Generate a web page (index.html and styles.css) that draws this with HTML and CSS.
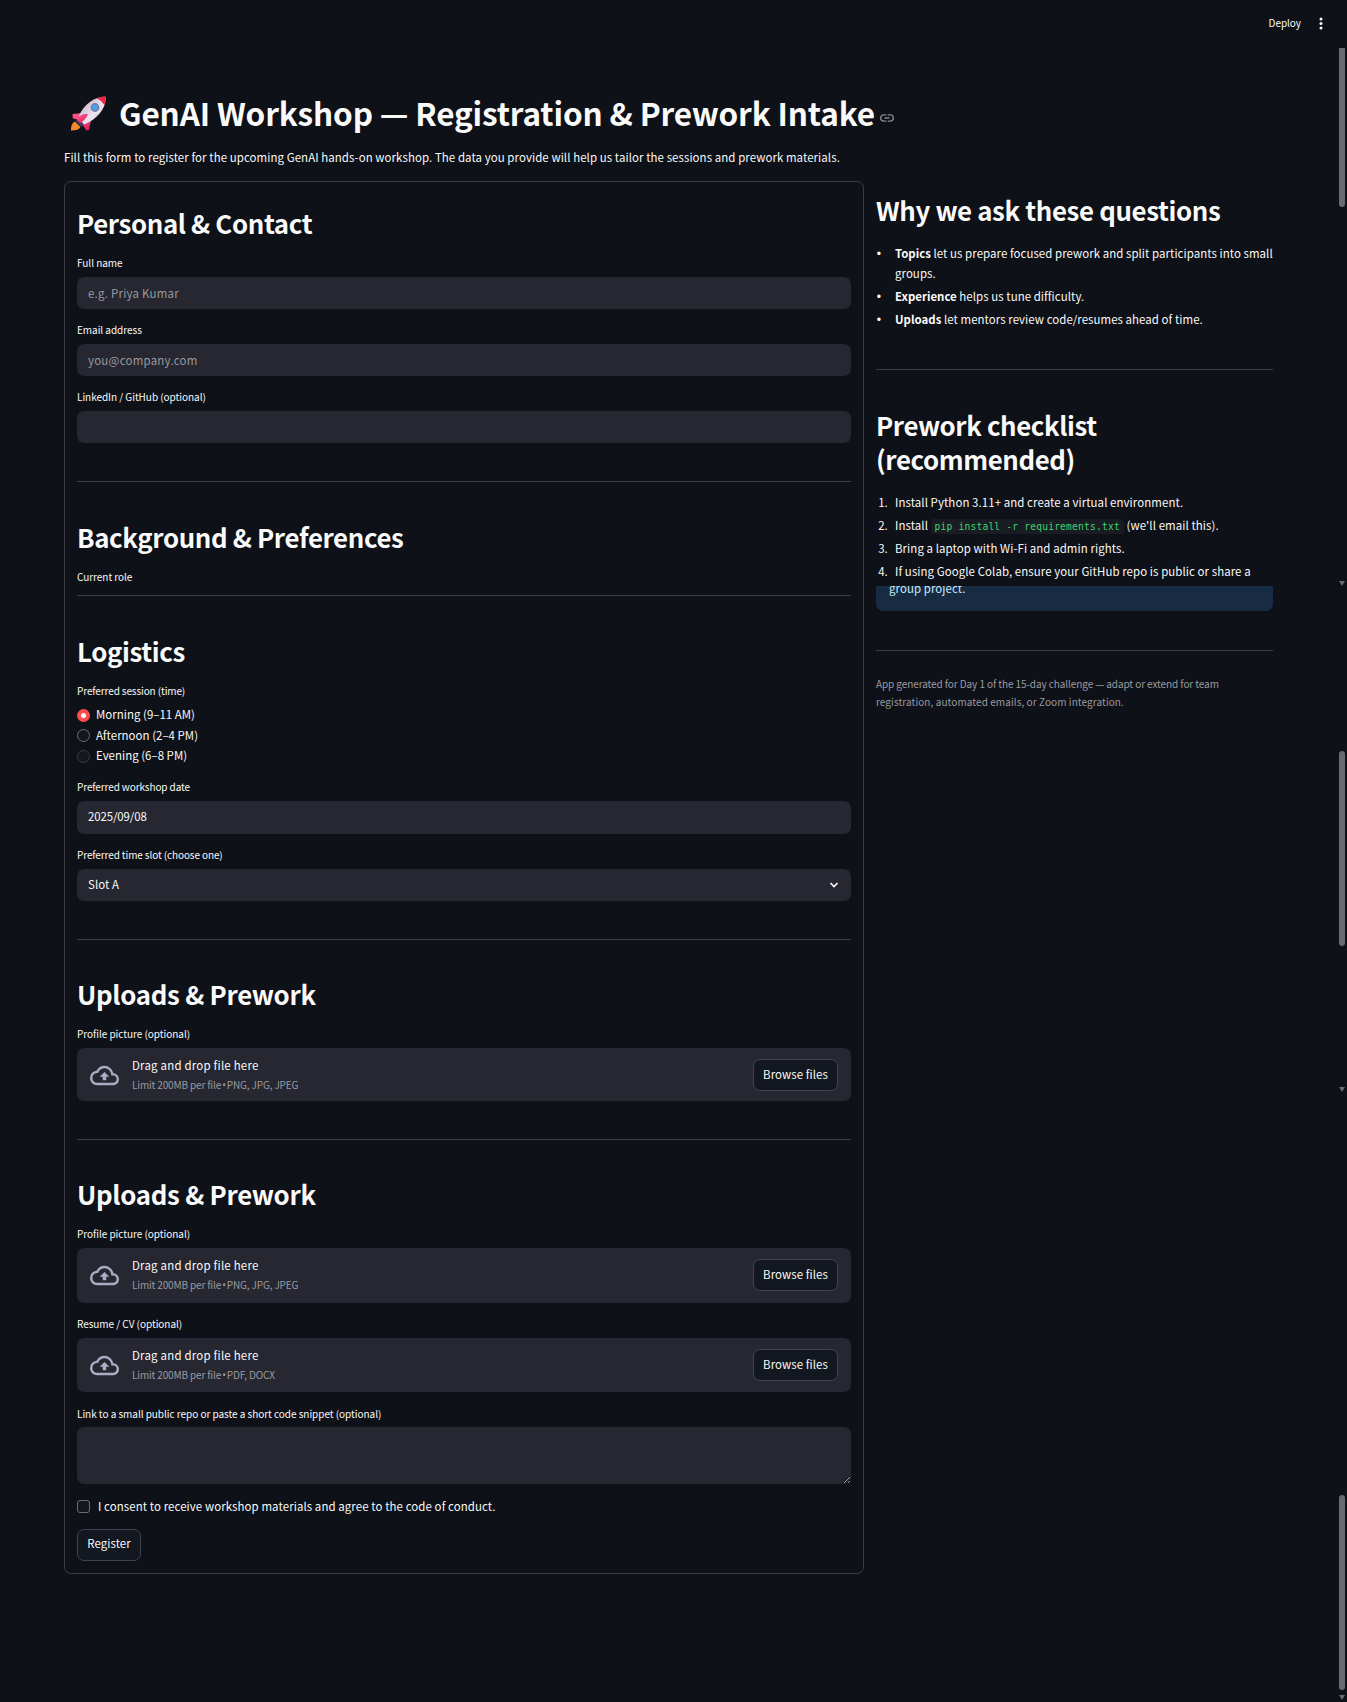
FILE: index.html
```html
<!DOCTYPE html>
<html lang="en">
<head>
<meta charset="utf-8">
<title>GenAI Workshop — Registration &amp; Prework Intake</title>
<link rel="stylesheet" href="styles.css">
</head>
<body>
<svg class="defs" width="0" height="0" aria-hidden="true">
  <symbol id="cloud" viewBox="0 0 24 24"><path d="M19.35 10.04A7.49 7.49 0 0 0 12 4C9.11 4 6.6 5.64 5.35 8.04A5.994 5.994 0 0 0 0 14c0 3.31 2.69 6 6 6h13c2.76 0 5-2.24 5-5 0-2.64-2.05-4.78-4.65-4.96zM19 18H6c-2.21 0-4-1.79-4-4 0-2.05 1.53-3.76 3.56-3.97l1.07-.11.5-.95A5.469 5.469 0 0 1 12 6c2.62 0 4.88 1.86 5.39 4.43l.3 1.5 1.53.11A2.98 2.98 0 0 1 22 15c0 1.65-1.35 3-3 3zM8 13h2.55v3h2.9v-3H16l-4-4z"/></symbol>
</svg>
<header class="toolbar">
  <span class="deploy">Deploy</span>
  <svg class="dots" viewBox="0 0 4 14"><circle cx="2" cy="2" r="1.5"/><circle cx="2" cy="6.5" r="1.5"/><circle cx="2" cy="11" r="1.5"/></svg>
</header>
<main class="page">
  <h1 class="title">
    <svg class="rocket" viewBox="0 0 35 35">
      <defs>
        <linearGradient id="hull" x1="0" y1="0" x2="1" y2="1"><stop offset=".2" stop-color="#c9b8cb"/><stop offset=".6" stop-color="#efe3f3"/><stop offset="1" stop-color="#b9a2ba"/></linearGradient>
        <linearGradient id="fin" x1="0" y1="0" x2="1" y2="1"><stop offset="0" stop-color="#ff5a86"/><stop offset="1" stop-color="#e0205f"/></linearGradient>
      </defs>
      <path fill="#f08a24" d="M4 25.500 9.500 31 Q8 34.500 0 34.500 Q-.3 27.500 4 25.500Z"/>
      <path fill="url(#fin)" d="M11 17 1.500 18 1.800 22.500 9 24Z M20 24 18 34 15.500 34.500 11 28Z"/>
      <path fill="#4b3a68" d="M4.500 25 7 22.500 13 28.500 10.500 31Z"/>
      <path fill="url(#hull)" d="M34.500 .7C24 .5 12 8 7 22L13 28.500C28 22.500 35.500 11 34.500 .7Z"/>
      <path fill="#ef2545" d="M26 2.200 Q30 .3 34.600 .6 Q35 5 33.500 9 Q30.500 4.500 26 2.200Z"/>
      <circle cx="24" cy="11.500" r="4.400" fill="#7c7691"/><circle cx="24" cy="11.500" r="3.200" fill="#4d9bea"/>
      <path fill="url(#fin)" d="M17 18 Q9 17.500 5.500 23.500 L9.500 27 Q14.500 24 17 18Z"/>
    </svg>
    <span class="title-text">GenAI Workshop — Registration &amp; Prework Intake</span>
    <svg class="link" viewBox="0 0 20 11"><path d="M9 1H5.500a4.500 4.500 0 0 0 0 9H9M11 1h3.500a4.500 4.500 0 0 1 0 9H11M6.500 5.500h7"/></svg>
  </h1>
  <p class="intro">Fill this form to register for the upcoming GenAI hands-on workshop. The data you provide will help us tailor the sessions and prework materials.</p>
  <div class="columns">
    <form class="form">
      <h2>Personal &amp; Contact</h2>
      <label class="field"><span>Full name</span><input type="text" placeholder="e.g. Priya Kumar"></label>
      <label class="field"><span>Email address</span><input type="text" placeholder="you@company.com"></label>
      <label class="field"><span>LinkedIn / GitHub (optional)</span><input type="text"></label>
      <hr>
      <h2>Background &amp; Preferences</h2>
      <div class="label">Current role</div>
      <hr class="tight">
      <h2>Logistics</h2>
      <div class="label snug">Preferred session (time)</div>
      <div class="radios">
        <div class="radio"><i class="dot on"></i><span>Morning (9–11 AM)</span></div>
        <div class="radio"><i class="dot"></i><span>Afternoon (2–4 PM)</span></div>
        <div class="radio"><i class="dot faint"></i><span>Evening (6–8 PM)</span></div>
      </div>
      <label class="field"><span class="snug">Preferred workshop date</span><input class="date" type="text" value="2025/09/08"></label>
      <label class="field"><span class="snug">Preferred time slot (choose one)</span>
        <div class="select"><b>Slot A</b><svg class="chevron" viewBox="0 0 10 6"><path d="M1.500 1 5 4.500 8.500 1"/></svg></div></label>
      <hr>
      <h2 class="upl">Uploads &amp; Prework</h2>
      <div class="field"><span>Profile picture (optional)</span>
        <div class="drop h53"><svg class="cloud"><use href="#cloud"/></svg><div class="drop-text"><p>Drag and drop file here</p><small>Limit 200MB per file <em>•</em> PNG, JPG, JPEG</small></div><button class="btn browse" type="button">Browse files</button></div></div>
      <hr>
      <h2 class="upl">Uploads &amp; Prework</h2>
      <div class="field"><span>Profile picture (optional)</span>
        <div class="drop h55"><svg class="cloud"><use href="#cloud"/></svg><div class="drop-text"><p>Drag and drop file here</p><small>Limit 200MB per file <em>•</em> PNG, JPG, JPEG</small></div><button class="btn browse" type="button">Browse files</button></div></div>
      <div class="field"><span>Resume / CV (optional)</span>
        <div class="drop h54"><svg class="cloud"><use href="#cloud"/></svg><div class="drop-text"><p>Drag and drop file here</p><small>Limit 200MB per file <em>•</em> PDF, DOCX</small></div><button class="btn browse" type="button">Browse files</button></div></div>
      <label class="field"><span class="snippet">Link to a small public repo or paste a short code snippet (optional)</span><textarea></textarea></label>
      <div class="consent"><i class="box"></i><span>I consent to receive workshop materials and agree to the code of conduct.</span></div>
      <button class="btn register" type="button">Register</button>
    </form>
    <aside class="side">
      <h2>Why we ask these questions</h2>
      <ul>
        <li><strong>Topics</strong> let us prepare focused prework and split participants into small groups.</li>
        <li><strong>Experience</strong> helps us tune difficulty.</li>
        <li><strong>Uploads</strong> let mentors review code/resumes ahead of time.</li>
      </ul>
      <hr>
      <h2 class="check">Prework checklist (recommended)</h2>
      <ol>
        <li>Install Python 3.11+ and create a virtual environment.</li>
        <li>Install <code>pip install -r requirements.txt</code> (we'll email this).</li>
        <li>Bring a laptop with Wi-Fi and admin rights.</li>
        <li>If using Google Colab, ensure your GitHub repo is public or share a</li>
      </ol>
      <div class="info"><p>group project.</p></div>
      <hr>
      <p class="caption"><span>App generated for Day 1 of the 15-day challenge — adapt or extend for team</span> registration, automated emails, or Zoom integration.</p>
    </aside>
  </div>
</main>
<i class="thumb t1"></i><i class="arrow a1"></i>
<i class="thumb t2"></i><i class="arrow a2"></i>
<i class="thumb t3"></i><i class="arrow a3"></i>
</body>
</html>
```
FILE: styles.css
```css
* { box-sizing: border-box; margin: 0; padding: 0; }
body {
  position: relative;
  height: 1702px;
  overflow: hidden;
  background: #0e1117;
  color: #fafafa;
  color-scheme: dark;
  font: 11.45px/20px "Noto Sans CJK SC", "Noto Sans", sans-serif;
  letter-spacing: .08px;
}
.defs { position: absolute; }
input, textarea, button { font: inherit; color: inherit; letter-spacing: inherit; }

.toolbar { display: flex; justify-content: flex-end; align-items: center; gap: 18px; height: 48px; padding-right: 24px; }
.deploy { margin-top: -2px; font-size: 10px; letter-spacing: -.05px; }
.dots { width: 4px; height: 14px; fill: #fafafa; }

.page { padding: 43px 74px 0 64px; }
.title { display: flex; align-items: center; height: 42px; font-size: 31.5px; line-height: 42px; font-weight: 700; letter-spacing: -.15px; white-space: nowrap; }
.rocket { width: 35px; height: 35px; margin: 2px 13px 0 7px; }
.title-text { width: 756px; }
.link { width: 14px; height: 8px; margin: 11px 0 0 5px; fill: none; stroke: #86888c; stroke-width: 1.9; }
.intro { margin-top: 14px; white-space: nowrap; }

.columns { display: grid; grid-template-columns: 800px 397px; gap: 12px; align-items: start; margin-top: 14px; }
.form { height: 1393px; padding: 24px 12px 12px; border: 1px solid #3b3d42; border-radius: 7px; }
h2 { height: 34px; margin-bottom: 15px; font-size: 25.8px; line-height: 34px; font-weight: 600; letter-spacing: -.35px; white-space: nowrap; }
hr { height: 1px; margin: 38px 0; border: 0; background: #3b3d42; }
hr.tight { margin-top: 10px; }
h2.upl { margin-top: -1px; letter-spacing: -.27px; }

.label, .field > span { display: block; height: 16px; font-size: 10px; line-height: 16px; letter-spacing: -.04px; white-space: nowrap; }
.field { display: block; }
.field > span { margin-bottom: 6px; }
.field > .snippet { line-height: 17px; }
.label.snug, .field > .snug { letter-spacing: -.11px; }
.field + .field { margin-top: 13px; }
input, .select, textarea, .drop { display: flex; width: 100%; border: 0; border-radius: 7px; background: #262730; outline: 0; }
input, .select { height: 32px; padding: 0 11px 1px; }
input::placeholder { color: #9a9aa0; opacity: 1; letter-spacing: .26px; }
.date { height: 33px; padding-bottom: 3px; letter-spacing: -.1px; }
.select { align-items: center; justify-content: space-between; }
.select b { margin-top: -1px; font-weight: 400; }
.chevron { width: 10px; height: 6px; margin-right: 1px; fill: none; stroke: #fafafa; stroke-width: 1.6; }
textarea { height: 57px; resize: vertical; }

.radios { margin: 5px 0 13.500px; }
.radio { display: flex; align-items: center; gap: 6px; height: 20.500px; letter-spacing: .03px; }
.dot { width: 13px; height: 13px; margin-top: 2px; border: 1px solid #6a6c71; border-radius: 50%; background: #131720; }
.dot.on { border: 4px solid #ff4b4b; background: #fff; }
.dot.faint { border-color: #3a3c42; }

.drop { align-items: center; padding: 0 13px; }
.h53 { height: 53px; }
.h55 { height: 55px; padding-bottom: 2px; }
.h54 { height: 54px; }
.cloud { width: 29px; height: 29px; margin-top: 2px; fill: #a9aec4; }
.h54 .cloud { margin-top: 0; }
.drop-text { flex: 1; margin-left: 13px; white-space: nowrap; }
.drop-text p { height: 20px; margin-top: -1px; letter-spacing: .22px; }
.drop-text small { display: block; height: 18px; margin-top: 1px; font-size: 10px; line-height: 18px; letter-spacing: -.15px; color: #9a9aa0; }
.drop-text em { font-family: "Noto Sans", sans-serif; font-style: normal; line-height: 1; margin: 0 -1px; }
.btn { height: 32px; padding-bottom: 2px; border: 1px solid #41444c; border-radius: 7px; background: #131720; white-space: nowrap; }
.browse { width: 85px; }
.register { display: block; width: 64px; margin-top: 13px; padding-bottom: 4px; }
.consent { display: flex; align-items: center; gap: 8px; height: 20px; margin-top: 12px; letter-spacing: .09px; white-space: nowrap; }
.box { width: 13px; height: 13px; margin-top: 1px; border: 1px solid #6c6e73; border-radius: 3px; background: #131720; }

.side { padding-top: 12px; line-height: 20.500px; }
.side ul, .side ol { padding-left: 19px; }
.side ul { height: 87.500px; margin-right: -4px; padding-top: 1px; line-height: 20px; letter-spacing: .06px; }
.side li + li { margin-top: 2.500px; }
.side ul li + li { margin-top: 3px; }
.side ul li::marker { content: "•\2003\200a"; font-family: "DejaVu Sans", sans-serif; }
.side ol li::marker { content: counter(list-item) ".\00a0\00a0\00a0"; letter-spacing: -.1px; }
.side strong { font-weight: 600; letter-spacing: 0; }
.side hr { margin: 39px 0 38px; }
.side .check { width: 300px; height: 69px; line-height: 34px; letter-spacing: -.38px; white-space: normal; }
code { padding: 2px 4px; border-radius: 3px; background: #1a1c24; color: #3dd56d; font: 9.600px "DejaVu Sans Mono", monospace; letter-spacing: .2px; }
.info { height: 25px; margin-top: 5px; padding-left: 13px; overflow: hidden; border-radius: 0 0 7px 7px; background: #172c43; color: #c7ebff; }
.info p { margin-top: -8px; }
.info + hr { margin: 39px 0 24px; }
.caption { font-size: 10px; line-height: 18px; color: #9a9aa0; }
.caption span { letter-spacing: -.09px; }

.thumb { position: absolute; left: 1339px; width: 6px; border-radius: 3px; background: #6b6b6e; }
.t1 { top: 48px; height: 159px; border-radius: 0 0 3px 3px; }
.t2 { top: 751px; height: 195px; }
.t3 { top: 1495px; height: 195px; }
.arrow { position: absolute; left: 1339px; border: 3px solid transparent; border-top: 5px solid #6b6b6e; border-bottom: 0; }
.a1 { top: 581px; }
.a2 { top: 1087px; }
.a3 { top: 1695px; }
```
